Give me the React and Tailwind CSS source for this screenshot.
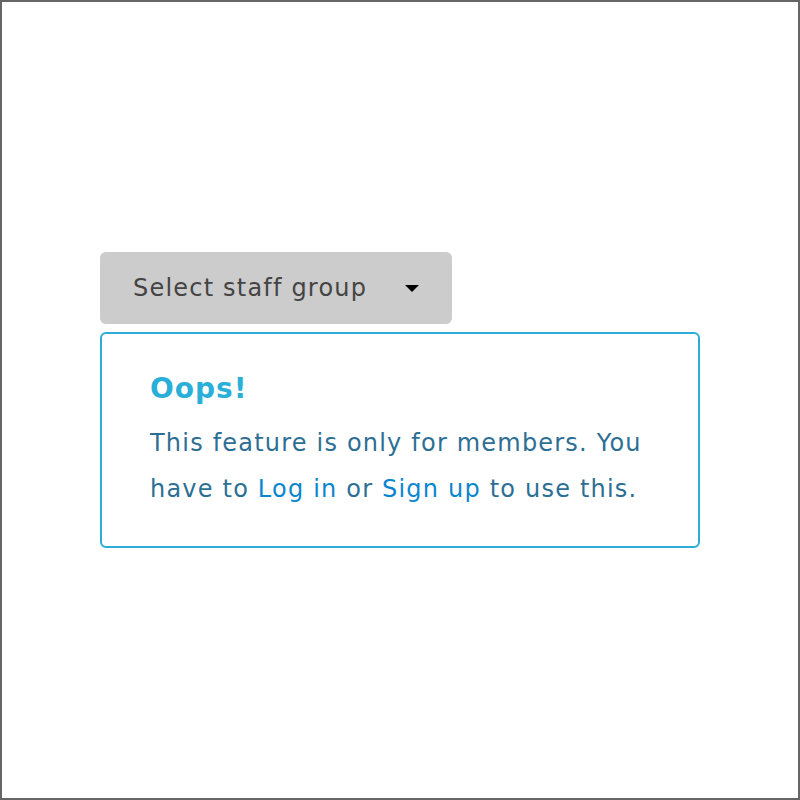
export default function App() {
  return (
    <div className="w-[800px] h-[800px] border-2 border-[#666666] bg-white pl-[98px] pt-[250px] font-['DejaVu_Sans',sans-serif]">
      {/* Staff group select */}
      <button className="flex items-center w-[352px] h-[72px] rounded-md bg-[#cccccc] pl-[33px] text-[24px] tracking-[1.2px] text-[#444444]">
        <span>Select staff group</span>
        <svg width="14" height="8" viewBox="0 0 14 8" className="ml-auto mr-[33px] mt-[2px]">
          <polygon points="0,0 14,0 7,7" fill="#000000" />
        </svg>
      </button>

      {/* Members-only notice */}
      <div className="mt-[8px] w-[600px] h-[216px] rounded-md border-2 border-[#2eaed6] pl-[48px] pr-[36px] pt-[35px]">
        <h2 className="text-[28px] font-bold leading-[40px] tracking-[1px] text-[#2aafd8]">Oops!</h2>
        <p className="mt-[11px] text-[24px] leading-[46px] tracking-[1.2px] text-[#2d6f94]">
          This feature is only for members. You have to{' '}
          <a className="text-[#0a86d0]">Log in</a> or{' '}
          <a className="text-[#0a86d0]">Sign up</a> to use this.
        </p>
      </div>
    </div>
  );
}
